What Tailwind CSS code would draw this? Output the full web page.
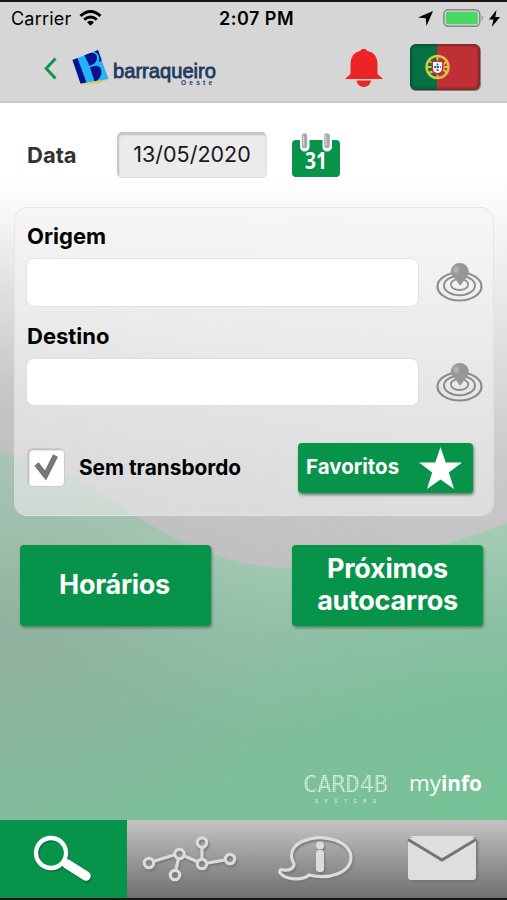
<!DOCTYPE html>
<html lang="pt">
<head>
<meta charset="utf-8">
<title>Barraqueiro Oeste</title>
<script src="https://cdn.jsdelivr.net/npm/@tailwindcss/browser@4"></script>
</head>
<body class="font-['Inter',sans-serif] text-black">
<div class="relative flex h-[900px] w-[507px] flex-col overflow-hidden border-y-2 border-[#171514]">

  <!-- Backdrop -->
  <svg class="absolute left-0 top-0 -z-10" width="507" height="896" viewBox="0 2 507 896">
    <defs>
      <linearGradient id="grey" x1="0" y1="0" x2="0" y2="1">
        <stop offset="0" stop-color="#fff"/><stop offset=".14" stop-color="#fff"/><stop offset=".3" stop-color="#f1f1f1"/>
        <stop offset=".72" stop-color="#cacaca"/><stop offset="1" stop-color="#c1bfbf"/>
      </linearGradient>
      <linearGradient id="leftShade" x1="0" y1="0" x2="1" y2="0">
        <stop offset="0" stop-color="#999" stop-opacity=".28"/><stop offset="1" stop-color="#aaa" stop-opacity="0"/>
      </linearGradient>
      <linearGradient id="fadeDown" x1="0" y1="0" x2="0" y2="1">
        <stop offset="0" stop-color="#000"/><stop offset=".55" stop-color="#fff"/><stop offset="1" stop-color="#777"/>
      </linearGradient>
      <mask id="m"><rect y="210" width="507" height="358" fill="url(#fadeDown)"/></mask>
      <linearGradient id="green" gradientUnits="userSpaceOnUse" x1="0" y1="450" x2="0" y2="820">
        <stop offset="0" stop-color="#b0cabb"/><stop offset=".25" stop-color="#a5cbb5"/><stop offset=".5" stop-color="#91bfa6"/>
        <stop offset=".75" stop-color="#83bd9c"/><stop offset="1" stop-color="#7cc09a"/>
      </linearGradient>
      <radialGradient id="dull" gradientUnits="userSpaceOnUse" cx="0" cy="630" r="270">
        <stop offset="0" stop-color="#92a69b" stop-opacity=".55"/><stop offset="1" stop-color="#92a69b" stop-opacity="0"/>
      </radialGradient>
      <radialGradient id="vivid" gradientUnits="userSpaceOnUse" cx="507" cy="790" r="280">
        <stop offset="0" stop-color="#70c394" stop-opacity=".6"/><stop offset="1" stop-color="#70c394" stop-opacity="0"/>
      </radialGradient>
    </defs>
    <rect y="102" width="507" height="500" fill="url(#grey)"/>
    <rect y="210" width="400" height="358" fill="url(#leftShade)" mask="url(#m)"/>
    <path d="M0 452Q48 460 92 487C124 507 149 527 190 545C224 560 256 568 297 568C385 568 445 545 507 523V820H0Z" fill="url(#green)"/>
    <path d="M0 452Q48 460 92 487C124 507 149 527 190 545C224 560 256 568 297 568C385 568 445 545 507 523V820H0Z" fill="url(#dull)"/>
    <path d="M0 452Q48 460 92 487C124 507 149 527 190 545C224 560 256 568 297 568C385 568 445 545 507 523V820H0Z" fill="url(#vivid)"/>
  </svg>

  <header class="h-[101px] shrink-0 border-b-2 border-[#cacaca] bg-[#d6d6d6]">
    <div class="grid h-[32px] grid-cols-3 items-center pl-[11px] pr-[7px] text-[18px]">
      <div class="flex items-center gap-[8px]">
        <span class="tracking-[0.2px]">Carrier</span>
        <svg width="23" height="16" viewBox="0 0 23 16" fill="none" stroke="#000" stroke-width="3"><path d="M1.500 6Q11.500-3 21.500 6M5.200 9.700Q11.500 4.300 17.800 9.700"/><path d="M8 12.200Q11.500 9.500 15 12.200L11.500 15.700Z" fill="#000" stroke="none"/></svg>
      </div>
      <span class="whitespace-nowrap pl-[2px] text-center font-semibold tracking-[0.5px]">2:07 PM</span>
      <div class="flex items-center justify-end">
        <svg class="mr-[10px]" width="15" height="15" viewBox="0 0 15 15"><path d="M15 0L8.500 15L7.700 7.300L0 6.500Z"/></svg>
        <svg class="mr-[4px]" width="42" height="18" viewBox="0 0 42 18"><rect x=".8" y=".8" width="36" height="16.400" rx="4.500" fill="none" stroke="#858585" stroke-width="1.400"/><rect x="2.800" y="2.800" width="32" height="12.400" rx="2" fill="#48d765"/><path d="M38.700 6Q41 9 38.700 12Z" fill="#858585"/></svg>
        <svg width="11" height="17" viewBox="0 0 11 17"><path d="M7.500 0L0 9.500H4.500L2.800 17L11 7H6.300Z"/></svg>
      </div>
    </div>
    <div class="flex h-[66px] items-center pl-[44px] pr-[25px]">
      <svg class="mt-[2px]" width="13" height="23" viewBox="0 0 13 23" fill="none" stroke="#129448" stroke-width="3"><path d="M11.500 1.500L2.200 11.500L11.500 21.500"/></svg>
      <svg class="ml-[15px] overflow-visible" width="146" height="36" viewBox="72 48 146 36">
        <path d="M80 82.500L107 77L107.500 79L98 82.500L83 83.500Z" fill="#e7c85d"/>
        <path d="M72.500 59L98 49L108.500 78L80.500 82.500Z" fill="#22b4f5"/>
        <path d="M72.500 59L77.500 57L86.500 81.500L80.500 82.500Z" fill="#07138e"/>
        <path d="M84.500 54.300L91 51.800Q96.500 52 97 56.500Q97 61 92.500 63.500L89.500 65Z" fill="#07138e"/>
        <path d="M90 66.500Q98 62.500 101 68Q103 74.500 97 79.500L94.500 80.200Z" fill="#07138e"/>
        <path d="M94.500 50.400L98 49L101.800 59.500L98.800 61Q101 54 94.500 50.400Z" fill="#07138e"/>
        <text x="113" y="77" font-family="Liberation Sans, sans-serif" font-size="21" fill="#203b61" stroke="#203b61" stroke-width=".8" textLength="103" lengthAdjust="spacingAndGlyphs">barraqueiro</text>
        <text x="181" y="84" font-family="Liberation Sans, sans-serif" font-size="6.500" font-weight="700" fill="#203b61" textLength="31">Oeste</text>
      </svg>
      <svg class="ml-auto" width="38" height="39" viewBox="0 0 38 39" fill="#ee2324"><path d="M0 31L5.500 26V16Q5.500 5 15 3Q18.500-1.500 22.500 3Q32.500 5 32.500 16V26L38 31ZM11.500 32.500H26Q25 39 18.800 39Q12.700 39 11.500 32.500Z"/></svg>
      <svg class="ml-[26px]" width="73" height="49" viewBox="0 0 73 49">
        <defs><clipPath id="f"><rect x="1" y="1" width="70" height="46" rx="6"/></clipPath><filter id="soft"><feGaussianBlur stdDeviation="1"/></filter></defs>
        <rect x="1" y="1.500" width="71" height="46.500" rx="6" fill="#8b7d7d"/>
        <g clip-path="url(#f)"><rect width="28" height="49" fill="#047144"/><rect x="28" width="45" height="49" fill="#be3033"/>
        <rect x="1" y="1" width="70" height="46" rx="6" fill="none" stroke="#222" stroke-opacity=".5" stroke-width="3" filter="url(#soft)"/><path d="M4 1.500H69" stroke="#fff" stroke-opacity=".55" stroke-width="2" filter="url(#soft)"/></g>
        <circle cx="28.500" cy="24" r="11" fill="none" stroke="#d5c447" stroke-width="2.500"/><path d="M19 18Q29 20 38 30M19 30Q29 28 38 18M18 24H39M28.500 13V35" fill="none" stroke="#d9c63e" stroke-width="1.900"/>
        <path d="M22.500 17.500H34.500V25Q34.500 31 28.500 32Q22.500 31 22.500 25Z" fill="#c92f35"/><path d="M24 19H33V25Q33 29.500 28.500 30Q24 29.500 24 25Z" fill="#fff"/><path d="M28.500 20.500V28M25.300 24H31.700" stroke="#24539a" stroke-width="1.800" stroke-dasharray="1.800 1"/>
      </svg>
    </div>
  </header>

  <main class="flex min-h-0 flex-1 flex-col">
    <div class="mt-[29px] flex h-[46px] items-center pl-[27px]">
      <span class="w-[90px] text-[22px] font-bold text-[#333]">Data</span>
      <div class="flex h-[46px] w-[150px] items-center justify-center rounded-[5px] border border-[#dedede] border-t-[#c4c4c4] border-l-[#c8c8c8] bg-[#ebebeb] pb-[2px] text-[21.500px] text-[#181818] shadow-[inset_1px_2px_2px_#c2c2c2]"><span class="whitespace-nowrap">13/05/2020</span></div>
      <svg class="ml-[24px]" width="50" height="46" viewBox="0 0 50 46"><rect x="1" y="8" width="48" height="37" rx="4" fill="#07944a"/><path d="M9.500 4V14.500Q9.500 19 13.500 19Q18 19 18 14.500V4M32 4V14.500Q32 19 36 19Q40.500 19 40.500 14.500V4" fill="#fff" stroke="#fff"/><path d="M13.500 4V13.500M36 4V13.500" stroke="#aaa7aa" stroke-width="5.500" stroke-linecap="round"/><path d="M12.500 4V13M35 4V13" stroke="#d2d0d2" stroke-width="1.500" stroke-linecap="round"/><text x="14" y="36.500" font-family="Open Sans, sans-serif" font-weight="700" font-size="22.500" fill="#fff" textLength="22" lengthAdjust="spacingAndGlyphs">31</text></svg>
    </div>

    <section class="ml-[14px] mt-[29px] h-[309px] w-[480px] shrink-0 rounded-[13px] border border-[#dadada]/50 bg-linear-to-b from-[#f5f5f5]/80 via-[#eeeeee]/70 to-[#efefef]/55 pl-[11px] pr-[10px] pt-[13px] text-[22px] font-bold">
      <div class="h-[30px] pl-px leading-[30px]">Origem</div>
      <div class="mt-[7px] flex items-center justify-between">
        <div class="h-[49px] w-[393px] rounded-[8px] border border-[#e3e3e3] bg-white"></div>
        <svg width="47" height="39" viewBox="0 0 47 39"><defs><radialGradient id="pin" cx=".3" cy=".3"><stop stop-color="#bdbdbd"/><stop offset=".45" stop-color="#969696"/></radialGradient></defs><g fill="none" stroke="#8f8f8f"><ellipse cx="23.500" cy="23.500" rx="22" ry="14" stroke-width="2.200"/><ellipse cx="23.500" cy="22.500" rx="15.500" ry="9.700" stroke-width="2"/><ellipse cx="23.500" cy="21.500" rx="8.700" ry="5.500" stroke-width="1.800"/></g><path d="M23.500 22L20 17C17 13 14.800 12 14.800 8.500A9 8.500 0 0132.800 8.500C32.800 12.500 30 14.500 28 17.500L24.500 22.500Z" fill="url(#pin)"/></svg>
      </div>
      <div class="mt-[14px] h-[30px] pl-px leading-[30px]">Destino</div>
      <div class="mt-[7px] flex items-center justify-between">
        <div class="h-[48px] w-[393px] rounded-[8px] border border-[#dedede] bg-white"></div>
        <svg width="47" height="39" viewBox="0 0 47 39"><g fill="none" stroke="#8b8b8b"><ellipse cx="23.500" cy="23.500" rx="22" ry="14" stroke-width="2.200"/><ellipse cx="23.500" cy="22.500" rx="15.500" ry="9.700" stroke-width="2"/><ellipse cx="23.500" cy="21.500" rx="8.700" ry="5.500" stroke-width="1.800"/></g><path d="M23.500 22L20 17C17 13 14.800 12 14.800 8.500A9 8.500 0 0132.800 8.500C32.800 12.500 30 14.500 28 17.500L24.500 22.500Z" fill="url(#pin)"/></svg>
      </div>
      <div class="mt-[36px] flex h-[51px] items-center">
        <div class="ml-[1px] flex h-[39px] w-[38px] items-center justify-center rounded-[5px] border border-[#ccc] bg-white shadow-[inset_1px_1px_2px_#aaa]"><svg width="25" height="27" viewBox="0 0 25 27"><path d="M2.500 10L11.500 21.500L21.500 1.500" fill="none" stroke="#777" stroke-width="5.500"/></svg></div>
        <span class="ml-[14px] whitespace-nowrap text-[20.800px]">Sem transbordo</span>
        <div class="ml-auto mr-[10px] flex h-[50px] w-[175px] items-center justify-between rounded-[4px] bg-[#07944a] pl-[8px] pr-[11px] text-white shadow-[1px_2px_3px_#64816a]"><span class="text-[20.500px]">Favoritos</span><svg width="43" height="42" viewBox="0 0 43 42" fill="#fff"><path d="M21.500 0L26.700 15.500H43L29.800 25.500L35 42L21.500 32.500L8 42L13.200 25.500L0 15.500H16.300Z"/></svg></div>
      </div>
    </section>

    <div class="mx-[20px] mt-[29px] flex justify-between pr-[4px] text-center text-[27px] font-bold leading-[32px] tracking-[-0.3px] text-white">
      <div class="flex h-[81px] w-[191px] items-center justify-center rounded-[4px] bg-[#07944a] pb-[2px] pr-[2px] shadow-[1px_2px_3px_#59866b]">Horários</div>
      <div class="flex h-[81px] w-[191px] items-center justify-center rounded-[4px] bg-[#07944a] pb-[2px] shadow-[1px_2px_3px_#59866b]">Próximos<br>autocarros</div>
    </div>

    <div class="mt-auto flex h-[51px] justify-end pr-[24px]">
      <svg class="overflow-visible" width="180" height="40" viewBox="304 768 180 40">
        <defs><pattern id="dots" width="2" height="2" patternUnits="userSpaceOnUse"><rect width="2" height="2" fill="#d9efdf" fill-opacity=".35"/><rect width="1.400" height="1.400" fill="#e9f8ec"/></pattern></defs>
        <text x="304" y="790.500" font-family="DejaVu Sans Mono, monospace" font-size="23" fill="url(#dots)" textLength="85" lengthAdjust="spacingAndGlyphs">CARD4B</text>
        <text x="316" y="801.500" font-family="Liberation Mono, monospace" font-size="5" font-weight="700" fill="#c8ead3" textLength="61">SYSTEMS</text>
        <text x="410" y="790" font-family="Open Sans, sans-serif" font-size="21.500" fill="#f5fff7" textLength="32" lengthAdjust="spacingAndGlyphs" font-weight="400">my</text><text x="442" y="790" font-family="Open Sans, sans-serif" font-size="21.500" fill="#fff" textLength="41" lengthAdjust="spacingAndGlyphs" font-weight="700">info</text>
      </svg>
    </div>
  </main>

  <nav class="grid h-[78px] shrink-0 grid-cols-[127px_126px_127px_127px] border-t border-[#bdbdbd] bg-linear-to-b from-[#c3c3c3] to-[#707070]">
    <div class="-mt-px bg-[#07944a]"><svg width="127" height="78" viewBox="0 820 127 78" fill="none" stroke="#fff"><g stroke="#086b38" opacity=".6" transform="translate(1.500 2)"><circle cx="51" cy="853" r="15" stroke-width="4"/><path d="M66 864L86 877" stroke-width="9" stroke-linecap="round"/></g><circle cx="51" cy="853" r="15" stroke-width="4.300"/><path d="M62 861L67 864" stroke-width="5"/><path d="M67 864L86 876" stroke-width="9.500" stroke-linecap="round"/></svg></div>
    <div class="drop-shadow-[1px_2px_1px_#777]"><svg width="126" height="77" viewBox="127 821 126 77" fill="none" stroke="#dcdcdc" stroke-width="3.200"><path d="M154.500 861L174 855M178.500 859L176 869M184.500 856L197 861.500M202 848V858M207.500 863L225 860"/><circle cx="149" cy="863" r="4.700"/><circle cx="179.500" cy="854" r="4.700"/><circle cx="175" cy="875" r="4.700"/><circle cx="202" cy="842.500" r="4.700"/><circle cx="202" cy="864" r="4.700"/><circle cx="230" cy="859" r="4.700"/></svg></div>
    <div class="drop-shadow-[1px_2px_1px_#777]"><svg width="127" height="77" viewBox="253 821 127 77"><path d="M294 864C289 855 292 847 301 842C325 831 352 843 351 858C350 873 329 880 309 875C302 881 286 880 280 873C279 870 281 869 283 870C290 871 294 868 294 864Z" fill="none" stroke="#dcdcdc" stroke-width="3.200"/><circle cx="320" cy="845.500" r="4" fill="#dcdcdc"/><rect x="316" y="850" width="8" height="22" rx="3" fill="#dcdcdc"/></svg></div>
    <div class="drop-shadow-[2px_2px_1px_#777]"><svg width="127" height="77" viewBox="380 821 127 77"><rect x="408" y="838" width="68" height="42" rx="3" fill="#dedede"/><path d="M408 839.500L442 860L476 839.500" fill="none" stroke="#747474" stroke-width="3"/><path d="M410 836H475L442 857Z" fill="#dedede"/></svg></div>
  </nav>
</div>
</body>
</html>
